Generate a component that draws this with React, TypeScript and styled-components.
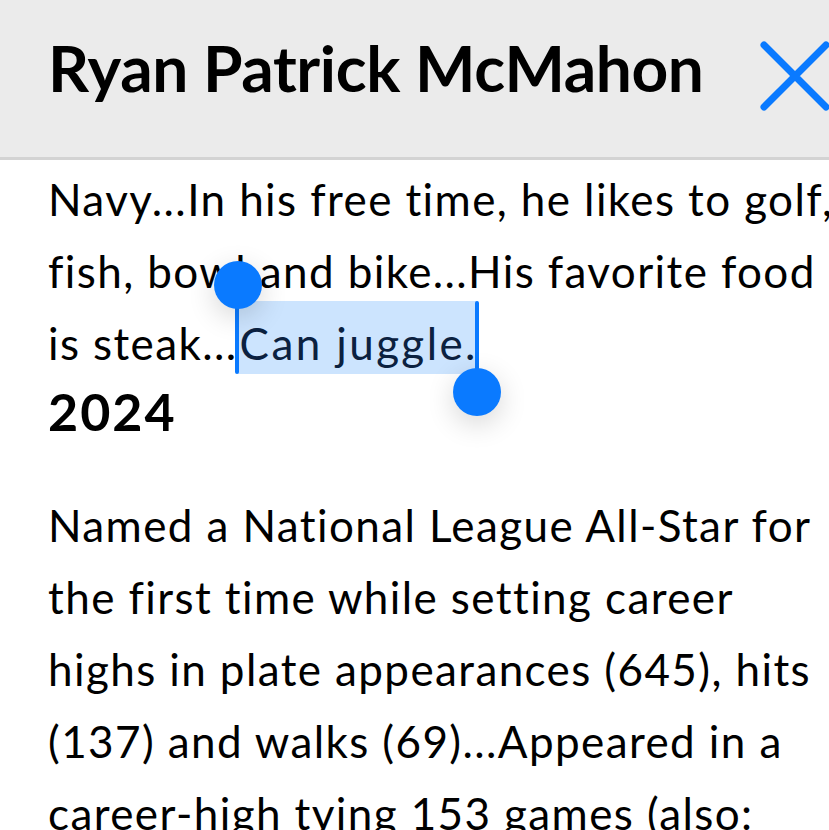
import React from "react";
import styled, { createGlobalStyle } from "styled-components";

const GlobalStyle = createGlobalStyle`
  html, body {
    margin: 0;
    padding: 0;
    background: #ffffff;
  }
  body {
    width: 829px;
    height: 830px;
    overflow: hidden;
    font-family: Lato, "Liberation Sans", sans-serif;
    color: #000;
  }
`;

const Screen = styled.div`
  position: relative;
  width: 829px;
  height: 830px;
  overflow: hidden;
`;

const Header = styled.header`
  height: 160px;
  box-sizing: border-box;
  background: #ebebeb;
  border-bottom: 3px solid #d3d3d3;
  display: flex;
  align-items: center;
  padding: 0 0 22px 48px;
  gap: 56px;
  white-space: nowrap;
`;

const Title = styled.h1`
  margin: 0;
  font-size: 64px;
  font-weight: 700;
  letter-spacing: -0.4px;
  color: #000;
`;

const CloseButton = styled.button`
  border: 0;
  background: none;
  padding: 0;
  margin-top: 16px;
  flex-shrink: 0;
  display: flex;
`;

const Body = styled.div`
  padding: 3px 0 0 48px;
  white-space: nowrap;
`;

const Para = styled.p`
  margin: 0;
  font-size: 44px;
  letter-spacing: 1.4px;
  line-height: 72px;
`;

const Year = styled.h2`
  margin: -4px 0 42px;
  font-size: 52px;
  font-weight: 700;
  letter-spacing: 2px;
  line-height: 72px;
`;

const Selected = styled.span`
  position: relative;
  background: #cce4fe;
  color: #0b2140;
  letter-spacing: 2.4px;
  padding: 16px 0 5px 2px;
`;

const Caret = styled.span<{ $side: "start" | "end" }>`
  position: absolute;
  width: 4px;
  background: #0a7aff;
  border-radius: 2px;
  ${(p) =>
    p.$side === "start"
      ? "left: -3px; top: -16px; bottom: 0;"
      : "right: -1px; top: 0; bottom: -18px;"}
`;

const Knob = styled.span<{ $side: "start" | "end" }>`
  position: absolute;
  width: 48px;
  height: 48px;
  border-radius: 50%;
  background: #0a7aff;
  box-shadow: 0 8px 28px rgba(0, 0, 0, 0.16);
  ${(p) =>
    p.$side === "start"
      ? "left: -21px; top: -24px;"
      : "right: -22px; bottom: -24px;"}
`;

const XIcon = () => (
  <svg width="70" height="70" viewBox="0 0 70 70">
    <path
      d="M4 4 L66 66 M66 4 L4 66"
      stroke="#0a7aff"
      strokeWidth="7"
      strokeLinecap="round"
      fill="none"
    />
  </svg>
);

export default function App() {
  return (
    <>
      <GlobalStyle />
      <Screen>
        <Header>
          <Title>Ryan Patrick McMahon</Title>
          <CloseButton aria-label="Close">
            <XIcon />
          </CloseButton>
        </Header>
        <Body>
          <Para>
            Navy...In his free time, he likes to golf,
            <br />
            fish, bowl and bike...His favorite food
            <br />
            is steak...
            <Selected>
              <Caret $side="start">
                <Knob $side="start" />
              </Caret>
              Can juggle.
              <Caret $side="end">
                <Knob $side="end" />
              </Caret>
            </Selected>
          </Para>
          <Year>2024</Year>
          <Para>
            Named a National League All-Star for
            <br />
            the first time while setting career
            <br />
            highs in plate appearances (645), hits
            <br />
            (137) and walks (69)...Appeared in a
            <br />
            career-high tying 153 games (also:
          </Para>
        </Body>
      </Screen>
    </>
  );
}
